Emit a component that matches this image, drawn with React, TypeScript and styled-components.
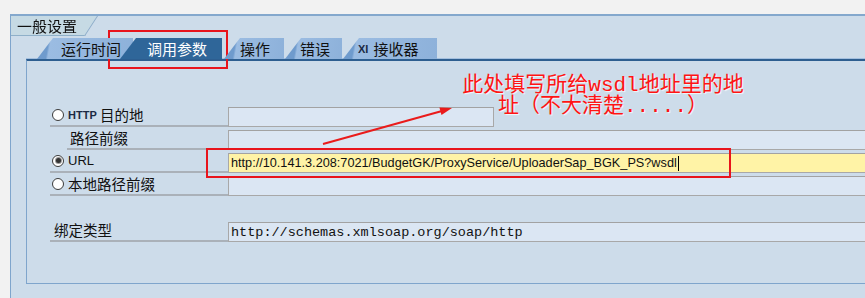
import { createGlobalStyle, styled } from "styled-components"

const Global = createGlobalStyle`
  html, body {
    margin: 0;
    padding: 0;
    background: #f2f2f2;
  }

  body {
    font-family: "Noto Sans CJK SC", "Liberation Sans", sans-serif;
    color: #111;
  }
`

const tabs = [
  { label: "运行时间", w: 96, pl: 24, ml: 26 },
  { label: "调用参数", w: 102, pl: 27, ml: -13, active: true },
  { label: "操作", w: 60, pl: 16, ml: 2 },
  { label: "错误", w: 57, pl: 15, ml: 1 },
  { label: "接收器", w: 94, pl: 15, ml: 1, prefix: "XI" },
]

const RadioButton = ({ checked }: { checked?: boolean }) => (
  <Radio>{checked && <RadioDot />}</Radio>
)

export default function App() {
  return (
    <Screen>
      <Global />
      <GroupBox>
        <GroupHeader>
          <GroupTitle>一般设置</GroupTitle>
        </GroupHeader>

        <TabStrip>
          {tabs.map((t) => (
            <Tab key={t.label} $w={t.w} $pl={t.pl} $ml={t.ml} $active={t.active}>
              {t.prefix && <TabPrefix>{t.prefix}</TabPrefix>}
              {t.label}
            </Tab>
          ))}
        </TabStrip>

        <Panel>
          <Form>
            <LabelCell>
              <RadioButton />
              <Latin $bold>HTTP</Latin>
              &nbsp;目的地
            </LabelCell>
            <FieldCell>
              <Field $width={266} />
            </FieldCell>

            <LabelCell $indent={17}>路径前缀</LabelCell>
            <FieldCell>
              <Field />
            </FieldCell>

            <LabelCell>
              <RadioButton checked />
              <Latin>URL</Latin>
            </LabelCell>
            <FieldCell>
              <Field $active>
                <UrlText>
                  http://10.141.3.208:7021/BudgetGK/ProxyService/UploaderSap_BGK_PS?wsdl
                </UrlText>
                <Caret />
              </Field>
            </FieldCell>

            <LabelCell>
              <RadioButton />
              本地路径前缀
            </LabelCell>
            <FieldCell>
              <Field />
            </FieldCell>

            <Spacer />

            <LabelCell $pad={4}>绑定类型</LabelCell>
            <FieldCell>
              <Field>
                <MonoText>http://schemas.xmlsoap.org/soap/http</MonoText>
              </Field>
            </FieldCell>
          </Form>
        </Panel>
      </GroupBox>

      {/* red markup drawn over the screenshot */}
      <MarkBox $x={108} $y={30} $w={120} $h={39} />
      <MarkBox $x={206} $y={148} $w={525} $h={30} />
      <Arrow width="140" height="50" viewBox="0 0 140 50">
        <line x1="5" y1="44" x2="124" y2="11" stroke="#ea1b1b" strokeWidth="2" />
        <polygon points="134,8 123.5,15.1 121.4,7.4" fill="#ea1b1b" />
      </Arrow>
      <Note>
        <NoteLine>此处填写所给wsdl地址里的地</NoteLine>
        <NoteLine>址（不大清楚.....）</NoteLine>
      </Note>
    </Screen>
  )
}

const Screen = styled.div`
  position: relative;
  display: flex;
  flex-direction: column;
  box-sizing: border-box;
  width: 865px;
  height: 298px;
  padding: 14px 0 0 10px;
  overflow: hidden;
  background: #f2f2f2;
`

const GroupBox = styled.section`
  flex: 1;
  display: flex;
  flex-direction: column;
  margin-right: -20px;

  border-top: 2px solid #84a8cd;
  border-left: 1px solid #7fa5cc;
  background: #cddcea;
`

const GroupHeader = styled.div`
  filter: drop-shadow(1px 0 0 #8aaac8);
`

const GroupTitle = styled.div`
  box-sizing: border-box;
  width: 87px;
  height: 20px;
  padding-left: 6px;

  border-bottom: 1px solid #8fb0c9;
  background: #c6dae4;
  clip-path: polygon(0 0, 86px 0, 73px 100%, 0 100%);

  font-size: 15px;
  line-height: 19px;
`

const TabStrip = styled.div`
  display: flex;
  align-items: flex-end;
  height: 23px;
`

const Tab = styled.div<{ $w: number; $pl: number; $ml: number; $active?: boolean }>`
  position: relative;
  z-index: ${({ $active }) => ($active ? 2 : 1)};
  display: flex;
  align-items: center;
  box-sizing: border-box;
  width: ${({ $w }) => $w}px;
  height: 21px;
  margin-left: ${({ $ml }) => $ml}px;
  padding-left: ${({ $pl }) => $pl}px;

  background: ${({ $active }) =>
    $active
      ? "#2f6699"
      : "linear-gradient(100deg, #6f9bcd 0, #6f9bcd 12px, #9bbce2 14px, #8db1da 100%)"};
  clip-path: polygon(16px 0, 100% 0, 100% 100%, 0 100%);

  color: ${({ $active }) => ($active ? "#fff" : "#111")};
  font-size: 15px;
  white-space: nowrap;
`

const TabPrefix = styled.span`
  margin-right: 5px;
  font: bold 11px "Liberation Sans", sans-serif;
  color: #1c2a44;
`

const Panel = styled.div`
  flex: 1;
  margin: 0 0 14px 15px;
  padding: 43px 0 0 23px;

  border-top: 2px solid #2d5e90;
  border-left: 1px solid #7fa5cc;
  border-bottom: 1px solid #7fa5cc;
  box-shadow: 0 -1px 0 #a4c0df;
`

const Form = styled.div`
  display: grid;
  grid-template-columns: 178px 1fr;
  grid-auto-rows: 23px;
`

const LabelCell = styled.div<{ $indent?: number; $pad?: number }>`
  display: flex;
  align-items: center;
  box-sizing: border-box;
  margin-left: ${({ $indent }) => $indent ?? 0}px;
  padding-left: ${({ $indent, $pad }) => $pad ?? ($indent ? 3 : 2)}px;

  border-bottom: 2px solid #aab1b9;

  font-size: 14.5px;
  white-space: nowrap;
`

const Spacer = styled.div`
  grid-column: 1 / -1;
`

const Radio = styled.span`
  display: inline-flex;
  align-items: center;
  justify-content: center;
  box-sizing: border-box;
  width: 12px;
  height: 12px;
  margin-right: 4px;

  border: 1.5px solid #3b3b3b;
  border-radius: 50%;
  background: #fff;
`

const RadioDot = styled.span`
  width: 5px;
  height: 5px;
  border-radius: 50%;
  background: #333;
  box-shadow: 0 0 0 1px #9a9a9a;
`

const Latin = styled.span<{ $bold?: boolean }>`
  font: ${({ $bold }) => ($bold ? "bold 11px" : "13px")} "Liberation Sans", sans-serif;
  color: ${({ $bold }) => ($bold ? "#1c2a44" : "#111")};
`

const FieldCell = styled.div`
  padding-top: 3px;
`

const Field = styled.div<{ $width?: number; $active?: boolean }>`
  display: flex;
  align-items: center;
  box-sizing: border-box;
  width: ${({ $width }) => ($width ? `${$width}px` : "auto")};
  height: 20px;
  padding-left: 2px;

  border-top: 1px solid #a2a2a2;
  border-left: 1px solid #a8a8a8;
  border-bottom: 1px solid #a8a8a8;
  border-right: ${({ $width }) => ($width ? "1px solid #a8a8a8" : "0")};
  background: ${({ $active }) => ($active ? "#fff3a6" : "#dbe6f3")};
`

const UrlText = styled.span`
  font: 12.7px "Liberation Sans", sans-serif;
  white-space: nowrap;
`

const Caret = styled.span`
  width: 1px;
  height: 15px;
  margin-left: 1px;
  background: #000;
`

const MonoText = styled.span`
  font: 13.5px "Liberation Mono", monospace;
  white-space: nowrap;
`

const MarkBox = styled.div<{ $x: number; $y: number; $w: number; $h: number }>`
  position: absolute;
  left: ${({ $x }) => $x}px;
  top: ${({ $y }) => $y}px;
  box-sizing: border-box;
  width: ${({ $w }) => $w}px;
  height: ${({ $h }) => $h}px;
  border: 2px solid #e8141c;
  pointer-events: none;
`

const Arrow = styled.svg`
  position: absolute;
  left: 318px;
  top: 100px;
`

const Note = styled.div`
  position: absolute;
  left: 438px;
  top: 75px;
  width: 330px;

  color: #ff1414;
  font: 21px/21px "Liberation Mono", "Noto Sans CJK SC", monospace;
  text-align: center;
  text-shadow: 1px 1px 1px rgba(255, 255, 255, 0.8);
  white-space: nowrap;
`

const NoteLine = styled.div``
